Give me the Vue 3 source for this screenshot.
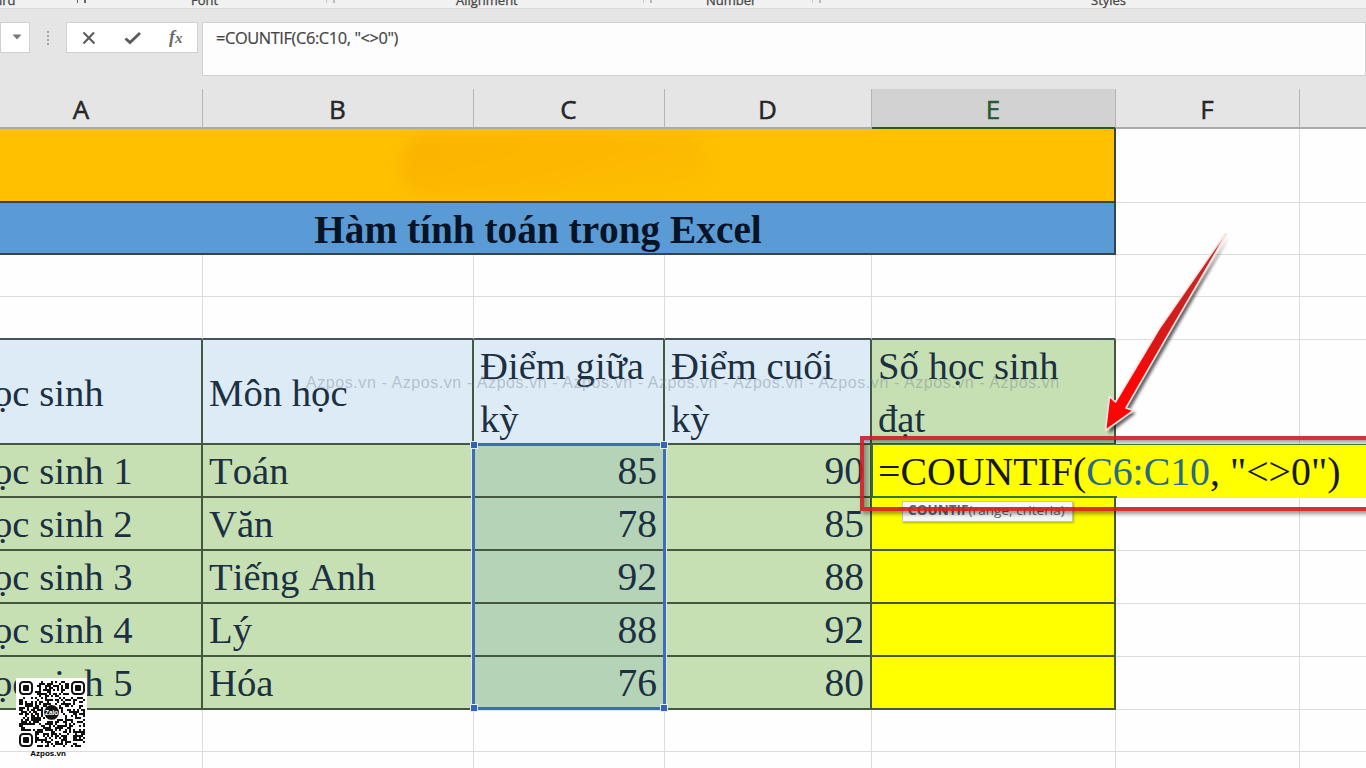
<script setup>
import { computed } from 'vue'

const groups = [
  { key: 'clip', label: 'ard', cls: 'g-clip' },
  { key: 'font', label: 'Font', cls: 'g-font' },
  { key: 'align', label: 'Alignment', cls: 'g-align' },
  { key: 'number', label: 'Number', cls: 'g-number' },
  { key: 'styles', label: 'Styles', cls: 'g-styles' },
]

const columns = ['A', 'B', 'C', 'D', 'E', 'F', '']

const rows = [
  { name: 'ọc sinh 1', subject: 'Toán', mid: 85, final: 90 },
  { name: 'ọc sinh 2', subject: 'Văn', mid: 78, final: 85 },
  { name: 'ọc sinh 3', subject: 'Tiếng Anh', mid: 92, final: 88 },
  { name: 'ọc sinh 4', subject: 'Lý', mid: 88, final: 92 },
  { name: 'ọc sinh 5', subject: 'Hóa', mid: 76, final: 80 },
]

const watermark = Array(9).fill('Azpos.vn').join(' - ')

// QR modules, 33 x 33, with the three finder corners kept free
const qrPath = computed(() => {
  const size = 33
  let seed = 20477
  let d = ''
  for (let y = 0; y < size; y++) {
    for (let x = 0; x < size; x++) {
      seed = (seed * 16807) % 2147483647
      const corner = (x < 8 && y < 8) || (x > 24 && y < 8) || (x < 8 && y > 24)
      const logo = Math.hypot(x - 16, y - 15.5) < 4.3
      if (!corner && !logo && seed / 2147483647 < 0.5) d += `M${x} ${y}h1v1h-1z`
    }
  }
  return d
})
</script>

<template>
  <div class="excel">
    <div class="ribbon">
      <span v-for="g in groups" :key="g.key" :class="['group', g.cls]">{{ g.label }}</span>
      <i class="launch l1"></i>
      <i class="launch l2"></i>
      <i class="launch l3"></i>
      <i class="launch l4"></i>
    </div>

    <!-- Formula bar -->
    <div class="bar">
      <div class="namebox">
        <svg width="10" height="6" viewBox="0 0 10 6"><path d="M0.5 0.5h9L5 5.5z" fill="#777" /></svg>
      </div>
      <div class="dots"><i></i><i></i><i></i><i></i></div>
      <div class="tools">
        <svg width="16" height="16" viewBox="0 0 16 16"><path d="M2.5 2.5L13.5 13.5M13 2.5L2.5 13.5" stroke="#5c5c5c" stroke-width="2.1" fill="none" /></svg>
        <svg width="18" height="16" viewBox="0 0 18 16"><path d="M1.5 8.5L6 12.5L16 3" stroke="#5c5c5c" stroke-width="2.9" fill="none" /></svg>
        <span class="fx">f<small>x</small></span>
      </div>
      <div class="input"><span>=COUNTIF(C6:C10, "&lt;&gt;0")</span></div>
    </div>

    <div class="cols heads">
      <div v-for="(c, i) in columns" :key="i" :class="['head', c === 'E' && 'head--on']">{{ c }}</div>
    </div>

    <!-- Sheet -->
    <div class="cols merged banner">
      <div class="wide"><span class="smear"></span></div>
      <div class="cell"></div>
      <div class="cell"></div>
    </div>
    <div class="cols merged title">
      <div class="wide"><span>Hàm tính toán trong Excel</span></div>
      <div class="cell"></div>
      <div class="cell"></div>
    </div>
    <div v-for="n in 2" :key="n" :class="['cols', 'blank', n === 2 && 'blank--last']">
      <div v-for="(c, i) in columns" :key="i" class="cell"></div>
    </div>
    <div class="cols labels">
      <div class="cell box cut">ọc sinh</div>
      <div class="cell box">Môn học</div>
      <div class="cell box">Điểm giữa<br>kỳ</div>
      <div class="cell box">Điểm cuối<br>kỳ</div>
      <div class="cell box green">Số học sinh<br>đạt</div>
      <div class="cell"></div>
      <div class="cell"></div>
    </div>
    <div v-for="r in rows" :key="r.name" class="cols data">
      <div class="cell box cut">{{ r.name }}</div>
      <div class="cell box">{{ r.subject }}</div>
      <div class="cell box num picked">{{ r.mid }}</div>
      <div class="cell box num">{{ r.final }}</div>
      <div class="cell box yellow"></div>
      <div class="cell"></div>
      <div class="cell"></div>
    </div>
    <div v-for="n in 2" :key="'b' + n" class="cols blank">
      <div v-for="(c, i) in columns" :key="i" class="cell"></div>
    </div>

    <div class="range"><i class="tl"></i><i class="tr"></i><i class="bl"></i><i class="br"></i></div>
    <div class="watermark">{{ watermark }}</div>

    <!-- Cell being edited -->
    <div class="edit">=COUNTIF(<b>C6:C10</b>, "&lt;&gt;0")</div>
    <div class="hint"><b>COUNTIF</b>(range, criteria)</div>
    <div class="frame"></div>

    <svg class="arrow" width="160" height="220" viewBox="0 0 160 220">
      <defs>
        <linearGradient id="shaft" x1="130" y1="0" x2="20" y2="190" gradientUnits="userSpaceOnUse">
          <stop offset="0" stop-color="#b53a3a" stop-opacity="0.3" />
          <stop offset="0.12" stop-color="#c22a2a" />
          <stop offset="0.6" stop-color="#d91818" />
          <stop offset="0.8" stop-color="#fb0606" />
        </linearGradient>
        <filter id="soft" x="-20%" y="-20%" width="140%" height="140%"><feGaussianBlur stdDeviation="1.6" /></filter>
      </defs>
      <path d="M127 5L16 174L11 168L7 202L34 181L27 179Z" transform="translate(3 3)" fill="#222" opacity="0.7" filter="url(#soft)" />
      <path d="M126 5L60 100L16.5 173L10.5 167.5L6.5 201.5L34.5 181.5L27 179L69 106L127.5 5Z" fill="url(#shaft)" stroke="#fbe3df" stroke-width="1.6" stroke-linejoin="round" />
    </svg>

    <div class="qr">
      <svg width="66" height="66" viewBox="0 0 33 33">
        <path :d="qrPath" fill="#111" />
        <g v-for="p in [[0, 0], [26, 0], [0, 26]]" :key="p.join()" :transform="`translate(${p[0]} ${p[1]})`">
          <rect x="0.5" y="0.5" width="6" height="6" rx="1.6" fill="#fff" stroke="#111" />
          <rect x="2" y="2" width="3" height="3" rx="0.5" fill="#111" />
        </g>
        <circle cx="16.3" cy="15.7" r="3.7" fill="#111" />
        <text x="16.3" y="16.8" text-anchor="middle" class="zalo">Zalo</text>
      </svg>
      <span>Azpos.vn</span>
    </div>
  </div>
</template>

<style>
body {
  overflow: hidden;
  background: #fff;
}
</style>

<style scoped>
.excel {
  position: relative;
  width: 1366px;
  height: 768px;
  overflow: hidden;
  background: #fefefe;
  font-family: "Liberation Serif", serif;
  font-kerning: none;
}

/* Ribbon */
.ribbon {
  position: relative;
  height: 9px;
  box-sizing: border-box;
  background: #f1f1f1;
  border-bottom: 1px solid #dadada;
  overflow: hidden;
}

.group {
  position: absolute;
  bottom: 1px;
  font: 13px/14px "Open Sans", sans-serif;
  color: #484848;
  -webkit-text-stroke: 0.3px currentColor;
}

.g-clip { left: -5px; }
.g-font { left: 191px; }
.g-align { left: 456px; }
.g-number { left: 706px; }
.g-styles { left: 1091px; }

.launch {
  position: absolute;
  top: 0;
  width: 6px;
  height: 3px;
  border-right: 2px solid #bbb;
  border-left: 1px solid #ccc;
}

.l1 { left: 77px; border-color: #666; }
.l2 { left: 326px; }
.l3 { left: 643px; }
.l4 { left: 812px; }

/* Formula bar */
.bar {
  display: flex;
  align-items: flex-start;
  height: 80px;
  box-sizing: border-box;
  padding-top: 13px;
  background: #e5e5e5;
}

.namebox {
  width: 30px;
  height: 31px;
  box-sizing: border-box;
  display: flex;
  justify-content: flex-end;
  padding: 11px 7px 0 0;
  background: #fff;
  border: 1px solid #d0d0d0;
}

.dots {
  width: 36px;
  padding-top: 9px;
  display: flex;
  flex-direction: column;
  align-items: center;
  gap: 2px;
}

.dots i {
  width: 2px;
  height: 2px;
  background: #a5a5a5;
}

.tools {
  width: 132px;
  height: 31px;
  box-sizing: border-box;
  display: flex;
  align-items: center;
  padding: 0 10px 0 14px;
  justify-content: space-between;
  background: #fff;
  border: 1px solid #d0d0d0;
}

.fx {
  font: italic bold 18px/24px "Liberation Serif", serif;
  color: #6a6a6a;
  width: 18px;
  white-space: nowrap;
}

.fx small {
  font-size: 15px;
}

.input {
  flex: 1;
  height: 54px;
  box-sizing: border-box;
  margin-left: 4px;
  padding: 5px 0 0 13px;
  background: #fdfdfd;
  border: 1px solid #d0d0d0;
  font: 16.4px/20px "Open Sans", sans-serif;
  letter-spacing: -0.4px;
  color: #454545;
  white-space: pre;
  -webkit-text-stroke: 0.2px currentColor;
}

/* Grid */
.cols {
  display: grid;
  grid-template-columns: 203px 271px 191px 207px 244px 184px 66px;
  grid-template-rows: 100%;
}

.heads {
  height: 40px;
  background: #e5e5e5;
}

.head {
  box-sizing: border-box;
  padding-right: 1px;
  border-right: 1px solid #b5b5b5;
  border-bottom: 2px solid #aaa;
  text-align: center;
  font: 26px/41px "Open Sans", sans-serif;
  color: #262626;
  -webkit-text-stroke: 0.5px currentColor;
}

.head:first-child {
  padding-right: 40px;
}

.head:last-child {
  border-right: none;
}

.head--on {
  background: #d2d2d2;
  border-bottom-color: #2d5a1c;
  color: #275a34;
}

.cell {
  box-sizing: border-box;
  border-right: 1px solid #dcdcdc;
  border-bottom: 1px solid #dcdcdc;
}

.cell:last-child {
  border-right: none;
}

.merged {
  grid-template-columns: 1116px 184px 66px;
}

.wide {
  box-sizing: border-box;
  border-right: 2px solid #33444a;
  border-bottom: 2px solid #33444a;
}

.banner {
  height: 74px;
}

.banner .wide {
  background: #ffc000;
  overflow: hidden;
}

.smear {
  display: block;
  width: 310px;
  height: 62px;
  margin: 6px 0 0 400px;
  border-radius: 30px;
  background: linear-gradient(165deg, #fbb300, #fcb800 50%, #ffbf00);
  filter: blur(6px);
}

.title {
  height: 52px;
}

.title .wide {
  background: #5b9bd5;
  padding-right: 38px;
  text-align: center;
  font-size: 39.3px;
  line-height: 54px;
  font-weight: bold;
  color: #071426;
}

.blank {
  height: 42px;
}

.blank--last {
  height: 43px;
}

.blank--last .cell:nth-child(-n + 5) {
  border-bottom: 2px solid #46545a;
}

.labels {
  height: 105px;
}

.data {
  height: 53px;
}

.box {
  border-right: 2px solid #46573f;
  border-bottom: 2px solid #46573f;
  padding-left: 6px;
  font-size: 38.7px;
  line-height: 53px;
  color: #1b3042;
  white-space: nowrap;
  background: #c6e0b4;
}

.labels .box {
  background: #ddebf7;
  display: flex;
  align-items: center;
  padding-top: 3px;
}

.labels .box:nth-child(n + 3) {
  display: block;
  padding-top: 0;
}

.labels .green {
  background: #c6e0b4;
}

.box.cut {
  padding-left: 0;
  text-indent: -7px;
}

.num {
  text-align: right;
  padding-right: 6px;
  font-size: 39.5px;
}

.picked {
  background: #b5d3b6;
}

.data .yellow {
  background: #ffff00;
}

/* Selected range outline */
.range {
  position: absolute;
  left: 472px;
  top: 443px;
  width: 194px;
  height: 267px;
  box-sizing: border-box;
  border: 3px solid #3e6db5;
  outline: 1px solid #d7e9ee;
}

.range i {
  position: absolute;
  width: 6px;
  height: 6px;
  background: #3563b5;
  outline: 1px solid #e2eefa;
}

.tl { left: -4px; top: -4px; }
.tr { right: -4px; top: -4px; }
.bl { left: -4px; bottom: -4px; }
.br { right: -4px; bottom: -4px; }

.watermark {
  position: absolute;
  left: 306px;
  top: 373px;
  font: 16px/19px "Liberation Sans", sans-serif;
  letter-spacing: 0.57px;
  color: rgba(120, 130, 140, 0.42);
  white-space: nowrap;
}

.edit {
  position: absolute;
  left: 871px;
  top: 444px;
  width: 495px;
  height: 54px;
  box-sizing: border-box;
  padding-left: 5px;
  border-top: 1px solid #47752c;
  border-left: 2px solid #2e6b2a;
  background: linear-gradient(#2e7a1c, #2e7a1c) 0 100% / 244px 2px no-repeat #ffff00;
  font-size: 39.8px;
  line-height: 55px;
  color: #17180c;
  white-space: pre;
}

.edit b {
  font-weight: normal;
  color: #2b6a86;
}

.hint {
  position: absolute;
  left: 902px;
  top: 501px;
  width: 171px;
  height: 21px;
  box-sizing: border-box;
  padding-left: 5px;
  border: 1px solid #c4c4c4;
  background: #f7f7f7;
  box-shadow: 1px 1px 2px rgba(0, 0, 0, 0.3);
  font: 13.5px/17px "Open Sans", sans-serif;
  letter-spacing: 0.05px;
  color: #666;
  white-space: nowrap;
}

.frame {
  position: absolute;
  left: 860px;
  top: 436px;
  width: 520px;
  height: 75px;
  box-sizing: border-box;
  border: 4px solid rgba(208, 28, 34, 0.9);
  box-shadow: 2px 3px 4px rgba(0, 0, 0, 0.4);
}

/* shadow that the frame casts on the strip left of and above the edited cell */
.frame::before {
  content: "";
  position: absolute;
  left: 0;
  top: 0;
  width: 100%;
  height: 4px;
  background: linear-gradient(rgba(0, 0, 0, 0.35), rgba(0, 0, 0, 0.12));
}

.frame::after {
  content: "";
  position: absolute;
  left: 0;
  top: 4px;
  width: 7px;
  bottom: 0;
  background: linear-gradient(90deg, rgba(0, 0, 0, 0.35), rgba(0, 0, 0, 0.08));
}

.arrow {
  position: absolute;
  left: 1099px;
  top: 229px;
}

.qr {
  position: absolute;
  left: 16px;
  top: 678px;
  width: 71px;
  height: 80px;
  box-sizing: border-box;
  padding: 3px 0 0 3px;
  background: linear-gradient(#fff, #fff) 0 0 / 71px 70px no-repeat;
}

.qr svg {
  display: block;
}

.qr span {
  display: block;
  width: 58px;
  text-align: center;
  font: bold 8px/14px "Liberation Sans", sans-serif;
  color: #000;
}

.zalo {
  font: bold 3.2px "Liberation Sans", sans-serif;
  fill: #fff;
}
</style>
